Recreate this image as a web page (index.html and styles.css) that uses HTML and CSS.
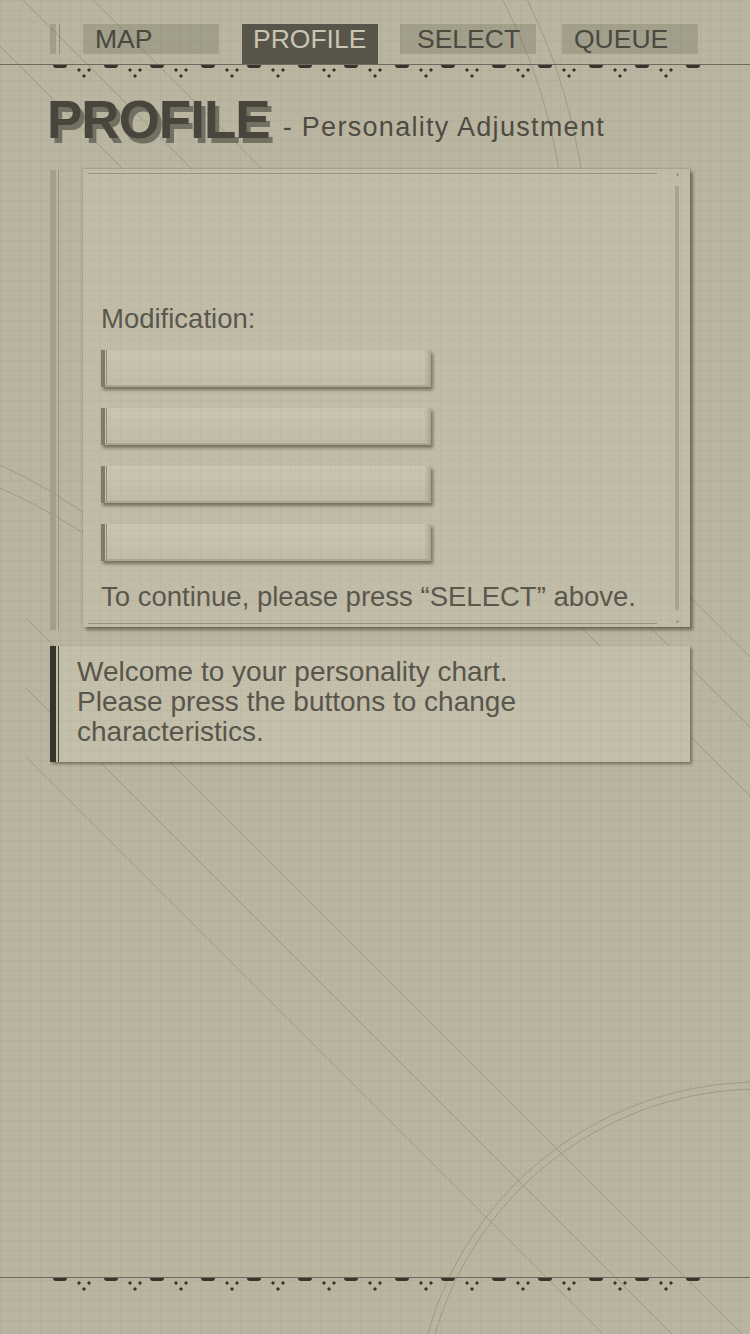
FILE: index.html
```html
<!DOCTYPE html>
<html lang="en">
<head>
<meta charset="utf-8">
<title>Profile</title>
<link rel="stylesheet" href="styles.css">
</head>
<body>
<svg class="bg-lines" width="750" height="1334" viewBox="0 0 750 1334" aria-hidden="true">
  <g stroke="#8c8875" stroke-opacity="0.6" stroke-width="1" fill="none">
    <line x1="93" y1="0" x2="750" y2="657"/>
    <line x1="23" y1="0" x2="750" y2="727"/>
    <line x1="0" y1="46" x2="750" y2="796"/>
    <line x1="26" y1="618" x2="742" y2="1334"/>
    <line x1="26" y1="688" x2="672" y2="1334"/>
    <line x1="26" y1="757" x2="603" y2="1334"/>
    <path d="M0 465 Q50 488 100 524"/>
    <path d="M0 488 Q50 510 100 544"/>
    <path d="M502.75 0 A566 566 0 0 1 566 260"/>
    <path d="M527.4 0 A588 588 0 0 1 588 260"/>
    <circle cx="760" cy="1427" r="345"/>
    <circle cx="760" cy="1427" r="338"/>
  </g>
</svg>
<div class="page">
  <header class="nav">
    <div class="tabs">
      <span class="mark"></span>
      <span class="tab tab-map">MAP</span>
      <span class="tab tab-profile">PROFILE</span>
      <span class="tab tab-select">SELECT</span>
      <span class="tab tab-queue">QUEUE</span>
    </div>
    <div class="rule">
      <div class="deco">
        <span class="u"><span class="dash"></span><span class="dots"></span></span>
        <span class="u"><span class="dash"></span><span class="dots"></span></span>
        <span class="u"><span class="dash"></span><span class="dots"></span></span>
        <span class="u"><span class="dash"></span><span class="dots"></span></span>
        <span class="u"><span class="dash"></span><span class="dots"></span></span>
        <span class="u"><span class="dash"></span><span class="dots"></span></span>
        <span class="u"><span class="dash"></span><span class="dots"></span></span>
        <span class="u"><span class="dash"></span><span class="dots"></span></span>
        <span class="u"><span class="dash"></span><span class="dots"></span></span>
        <span class="u"><span class="dash"></span><span class="dots"></span></span>
        <span class="u"><span class="dash"></span><span class="dots"></span></span>
        <span class="u"><span class="dash"></span><span class="dots"></span></span>
        <span class="u"><span class="dash"></span><span class="dots"></span></span>
        <span class="u"><span class="dash"></span></span>
      </div>
    </div>
  </header>

  <h1 class="title"><span class="title-main">PROFILE</span><span class="title-sub">- Personality Adjustment</span></h1>

  <main class="main">
    <div class="sidebar"></div>
    <section class="panel">
      <span class="frame frame-top"></span>
      <span class="frame frame-bottom"></span>
      <span class="frame frame-bar"></span>
      <span class="frame frame-dot frame-dot-top"></span>
      <span class="frame frame-dot frame-dot-bottom"></span>
      <p class="label">Modification:</p>
      <div class="btns">
        <div class="btn"></div>
        <div class="btn"></div>
        <div class="btn"></div>
        <div class="btn"></div>
      </div>
      <p class="hint">To continue, please press “SELECT” above.</p>
    </section>
  </main>

  <div class="message">
    <p>Welcome to your personality chart.<br>Please press the buttons to change<br>characteristics.</p>
  </div>

  <footer class="footer">
    <div class="deco">
      <span class="u"><span class="dash"></span><span class="dots"></span></span>
      <span class="u"><span class="dash"></span><span class="dots"></span></span>
      <span class="u"><span class="dash"></span><span class="dots"></span></span>
      <span class="u"><span class="dash"></span><span class="dots"></span></span>
      <span class="u"><span class="dash"></span><span class="dots"></span></span>
      <span class="u"><span class="dash"></span><span class="dots"></span></span>
      <span class="u"><span class="dash"></span><span class="dots"></span></span>
      <span class="u"><span class="dash"></span><span class="dots"></span></span>
      <span class="u"><span class="dash"></span><span class="dots"></span></span>
      <span class="u"><span class="dash"></span><span class="dots"></span></span>
      <span class="u"><span class="dash"></span><span class="dots"></span></span>
      <span class="u"><span class="dash"></span><span class="dots"></span></span>
      <span class="u"><span class="dash"></span><span class="dots"></span></span>
      <span class="u"><span class="dash"></span></span>
    </div>
  </footer>
</div>
</body>
</html>
```

FILE: styles.css
```css
html, body {
  margin: 0;
  padding: 0;
}

body {
  width: 750px;
  height: 1334px;
  overflow: hidden;
  position: relative;
  font-family: "Liberation Sans", Arial, sans-serif;
  background-color: #bab5a0;
  background-image:
    linear-gradient(rgba(95, 90, 68, 0.06) 1px, transparent 1px),
    linear-gradient(90deg, rgba(95, 90, 68, 0.06) 1px, transparent 1px);
  background-size: 10px 10px;
}

.bg-lines {
  position: absolute;
  left: 0;
  top: 0;
  z-index: 0;
}

.page {
  position: relative;
  z-index: 1;
  height: 1334px;
  display: flex;
  flex-direction: column;
}

/* ---------- navigation ---------- */
.nav {
  padding-top: 24px;
}

.tabs {
  display: flex;
  align-items: flex-start;
  height: 40px;
  padding-left: 50px;
}

.mark {
  width: 10px;
  height: 30px;
  background: linear-gradient(90deg,
    rgba(100, 98, 82, 0.27) 0 6px,
    transparent 6px 9px,
    rgba(100, 98, 82, 0.45) 9px 10px);
}

.tab {
  box-sizing: border-box;
  width: 136px;
  height: 30px;
  font-size: 26.5px;
  line-height: 30px;
  color: #4b483f;
  background: rgba(100, 98, 82, 0.27);
  white-space: nowrap;
}

.tab-map { margin-left: 23px; padding-left: 12px; }
.tab-profile {
  margin-left: 23px;
  padding-left: 11px;
  height: 40px;
  background: #57544a;
  color: #cbc6b1;
}
.tab-select { margin-left: 22px; padding-left: 17px; }
.tab-queue { margin-left: 26px; padding-left: 12px; }

.rule {
  border-top: 1px solid #6d6a5d;
}

/* ---------- decorative strip ---------- */
.deco {
  display: flex;
  height: 16px;
  padding-left: 53px;
}

.u {
  display: flex;
  align-items: flex-start;
  flex: none;
  width: 51px;
}

.u:nth-child(even) {
  width: 46px;
}

.dash {
  width: 14px;
  height: 3px;
  background: #36342d;
  border-radius: 0 0 3px 3px;
}

.dots {
  width: 14px;
  height: 14px;
  margin-left: 10px;
  background:
    radial-gradient(circle at 2px 5px, #36342d 1.3px, transparent 1.9px),
    radial-gradient(circle at 12px 5px, #36342d 1.3px, transparent 1.9px),
    radial-gradient(circle at 7px 11px, #36342d 1.3px, transparent 1.9px);
}

/* ---------- title ---------- */
.title {
  margin: 9px 0 0;
  padding-left: 47px;
  height: 60px;
  line-height: 60px;
  font-weight: normal;
  white-space: nowrap;
}

.title-main {
  font-size: 53px;
  font-weight: bold;
  letter-spacing: -1px;
  color: #48453c;
  text-shadow: 4px 5px 0 #727061;
}

.title-sub {
  margin-left: 13px;
  font-size: 27px;
  line-height: 30px;
  letter-spacing: 1.3px;
  color: #4e4b42;
  vertical-align: 2px;
}

/* ---------- main panel ---------- */
.main {
  display: flex;
  align-items: flex-start;
  padding-left: 50px;
  margin-top: 19px;
}

.sidebar {
  flex: none;
  width: 9px;
  height: 460px;
  margin-top: 1px;
  background: linear-gradient(90deg,
    #a29f8c 0 6px,
    transparent 6px 8px,
    #9a9784 8px 9px);
}

.panel {
  position: relative;
  flex: none;
  box-sizing: border-box;
  width: 607px;
  height: 458px;
  margin-left: 24px;
  padding: 134px 0 0 18px;
  background-color: #c1bca8;
  background-image:
    linear-gradient(rgba(95, 90, 68, 0.05) 1px, transparent 1px),
    linear-gradient(90deg, rgba(95, 90, 68, 0.05) 1px, transparent 1px);
  background-size: 10px 10px;
  background-attachment: fixed;
  box-shadow:
    0 0 2px rgba(70, 66, 52, 0.45),
    3px 3px 3px rgba(60, 57, 45, 0.55);
}

.frame {
  position: absolute;
  display: block;
}

.frame-top,
.frame-bottom {
  left: 5px;
  width: 569px;
  height: 1px;
  background: #979381;
}

.frame-top { top: 4px; }
.frame-bottom { top: 454px; }

.frame-bar {
  left: 592px;
  top: 17px;
  width: 4px;
  height: 424px;
  background: #a7a391;
}

.frame-dot {
  left: 593px;
  width: 3px;
  height: 3px;
  border-radius: 50%;
  background: #9e9a88;
}

.frame-dot-top { top: 4px; }
.frame-dot-bottom { top: 451px; }

.label,
.hint {
  margin: 0;
  font-size: 27.5px;
  line-height: 32px;
  color: #5a574c;
  white-space: nowrap;
}

.btns {
  display: flex;
  flex-direction: column;
  gap: 21px;
  margin-top: 15px;
}

.btn {
  box-sizing: border-box;
  width: 330px;
  height: 37px;
  border-left: 4px solid #7e7b6c;
  background-color: #c5c0ab;
  background-image:
    linear-gradient(90deg, #c9c4af 0 1px, #8e8b7b 1px 2px, transparent 2px),
    linear-gradient(rgba(95, 90, 68, 0.05) 1px, transparent 1px),
    linear-gradient(90deg, rgba(95, 90, 68, 0.05) 1px, transparent 1px),
    linear-gradient(#cbc6b1, #c1bca7);
  background-size: auto, 10px 10px, 10px 10px, auto;
  background-attachment: scroll, fixed, fixed, scroll;
  box-shadow:
    2px 3px 3px rgba(58, 55, 44, 0.55),
    inset 0 -2px 0 #a9a592,
    inset -8px 0 5px -5px rgba(60, 56, 44, 0.22);
}

.hint {
  margin-top: 20px;
}

/* ---------- message ---------- */
.message {
  box-sizing: border-box;
  width: 640px;
  height: 116px;
  margin: 16px 0 0 50px;
  padding: 11px 0 0 27px;
  background-color: #c4bfaa;
  background-image:
    linear-gradient(90deg, #36342d 0 6px, transparent 6px 8px, #4a473e 8px 9px, transparent 9px),
    linear-gradient(rgba(95, 90, 68, 0.05) 1px, transparent 1px),
    linear-gradient(90deg, rgba(95, 90, 68, 0.05) 1px, transparent 1px);
  background-size: auto, 10px 10px, 10px 10px;
  background-attachment: scroll, fixed, fixed;
  box-shadow: 2px 2px 3px rgba(55, 52, 42, 0.55);
}

.message p {
  margin: 0;
  font-size: 28px;
  line-height: 30px;
  color: #58554b;
  white-space: nowrap;
}

/* ---------- footer ---------- */
.footer {
  margin-top: auto;
  margin-bottom: 40px;
  border-top: 1px solid #6d6a5d;
}
```
